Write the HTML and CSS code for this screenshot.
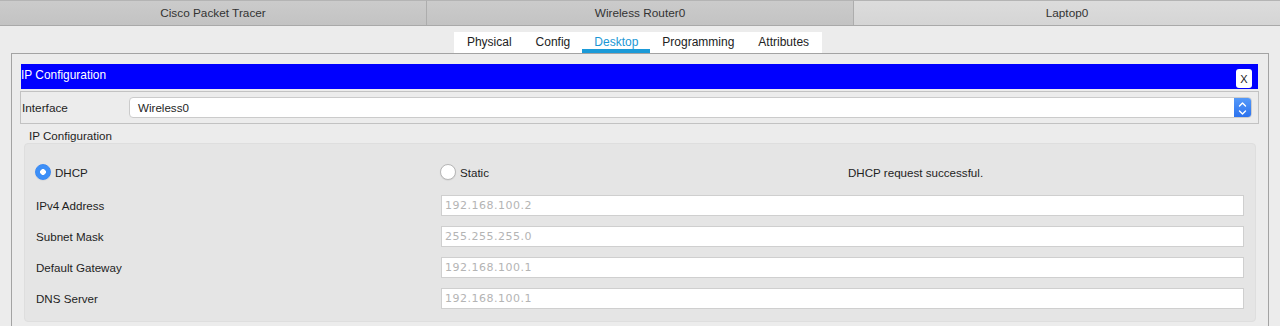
FILE: index.html
```html
<!DOCTYPE html>
<html>
<head>
<meta charset="utf-8">
<link rel="stylesheet" href="styles.css">
</head>
<body>
<div class="titlebar">
  <div class="wtab">Cisco Packet Tracer</div>
  <div class="wtab">Wireless Router0</div>
  <div class="wtab active">Laptop0</div>
</div>
<div class="subtabs-wrap">
  <div class="subtabs">
    <span class="stab">Physical</span>
    <span class="stab">Config</span>
    <span class="stab active">Desktop</span>
    <span class="stab">Programming</span>
    <span class="stab">Attributes</span>
  </div>
</div>
<div class="panel">
  <div class="app-title">
    <span class="app-name">IP Configuration</span>
    <span class="close">X</span>
  </div>
  <div class="iface-row">
    <span class="iface-label">Interface</span>
    <div class="select">
      <span class="select-value">Wireless0</span>
      <span class="stepper">
        <svg width="17" height="21" viewBox="0 0 17 21"><path d="M5.5 8 L8.5 5 L11.5 8" fill="none" stroke="#fff" stroke-width="1.4" stroke-linecap="round" stroke-linejoin="round"/><path d="M5.5 13 L8.5 16 L11.5 13" fill="none" stroke="#fff" stroke-width="1.4" stroke-linecap="round" stroke-linejoin="round"/></svg>
      </span>
    </div>
  </div>
  <div class="section-label">IP Configuration</div>
  <div class="ipbox">
    <div class="radio-row">
      <span class="radio-opt"><span class="radio on"></span>DHCP</span>
      <span class="radio-opt"><span class="radio"></span>Static</span>
      <span class="status">DHCP request successful.</span>
    </div>
    <div class="field"><span class="flabel">IPv4 Address</span><div class="input">192.168.100.2</div></div>
    <div class="field"><span class="flabel">Subnet Mask</span><div class="input">255.255.255.0</div></div>
    <div class="field"><span class="flabel">Default Gateway</span><div class="input">192.168.100.1</div></div>
    <div class="field"><span class="flabel">DNS Server</span><div class="input">192.168.100.1</div></div>
  </div>
</div>
</body>
</html>
```

FILE: styles.css
```css
* { box-sizing: border-box; }
html, body { margin: 0; padding: 0; }
body {
  background: #ececec;
  font-family: "Liberation Sans", Arial, sans-serif;
  font-size: 11.6px;
  color: #1e1e1e;
  overflow: hidden;
  height: 326px;
}
.titlebar {
  display: flex;
  height: 26px;
  border-bottom: 1px solid #a9a9a9;
}
.wtab {
  flex: 1;
  display: flex;
  align-items: center;
  justify-content: center;
  font-size: 11.8px;
  color: #333;
  background: linear-gradient(#cbcbcb, #c3c3c3);
  border-left: 1px solid #adadad;
  border-top: 1px solid #b4b4b4;
}
.wtab:first-child { border-left: none; }
.wtab.active { background: linear-gradient(#dcdcdc, #d5d5d5); }
.subtabs-wrap {
  display: flex;
  justify-content: center;
  padding-top: 6px;
  padding-right: 4px;
}
.subtabs {
  display: flex;
  background: #fff;
  height: 21px;
  padding: 0 1px;
}
.stab {
  display: flex;
  align-items: center;
  padding: 4px 12px 2px;
  font-size: 12px;
  color: #222;
  border-bottom: 4px solid transparent;
}
.stab.active {
  color: #1b97d5;
  border-bottom-color: #1b9ad8;
}
.panel {
  margin: 0 11px;
  border: 1px solid #a3a3a3;
  padding: 10px 10px 10px 9px;
}
.app-title {
  display: flex;
  justify-content: space-between;
  align-items: flex-start;
  height: 25px;
  background: #0000ff;
  color: #fff;
  font-size: 11.9px;
}
.app-name {
  line-height: 23px;
}
.close {
  width: 16px;
  height: 19px;
  margin: 5px 6px 0 0;
  background: #fff;
  color: #222;
  border-radius: 3px;
  display: flex;
  align-items: center;
  justify-content: center;
  font-size: 11px;
}
.iface-row {
  display: flex;
  margin: 2px -1px 0;
  border: 1px solid #c2c2c2;
  height: 33px;
  padding: 5px 6px 5px 1px;
  align-items: stretch;
}
.iface-label {
  width: 107px;
  display: flex;
  align-items: center;
  font-size: 11.8px;
}
.select {
  flex: 1;
  display: flex;
  background: #fff;
  border: 1px solid #cbcbcb;
  border-radius: 4px;
  overflow: hidden;
  height: 21px;
}
.select-value {
  flex: 1;
  display: flex;
  align-items: center;
  padding-left: 8px;
}
.stepper {
  width: 17px;
  background: linear-gradient(#5499f9, #2c72ee);
  display: flex;
}
.section-label {
  height: 19px;
  line-height: 24px;
  padding-left: 8px;
}
.ipbox {
  margin: 0 2px 0 3px;
  background: #e5e5e5;
  border: 1px solid #dedede;
  border-radius: 4px;
  padding: 20px 11px 12px 11px;
  display: flex;
  flex-direction: column;
  gap: 10px;
}
.radio-row {
  display: grid;
  grid-template-columns: 405px 407px 1fr;
  align-items: center;
  height: 16px;
  margin-bottom: 5px;
}
.radio-opt {
  display: flex;
  align-items: center;
  gap: 4px;
  margin-left: -1px;
}
.radio {
  width: 16px;
  height: 16px;
  border-radius: 50%;
  background: #fff;
  border: 1px solid #b7b7b7;
  box-shadow: 0 0.5px 1px rgba(0,0,0,0.1);
}
.radio.on {
  background: radial-gradient(circle, #fff 0 2.6px, #3d8ff7 3.1px);
  border-color: #3a8af4;
}
.status { color: #1e1e1e; }
.field {
  display: grid;
  grid-template-columns: 405px 1fr;
  align-items: center;
  height: 21px;
}
.input {
  height: 21px;
  background: #fff;
  border: 1px solid #cfcfcf;
  display: flex;
  align-items: center;
  padding-left: 3px;
  font-family: "DejaVu Sans", sans-serif;
  font-size: 11px;
  letter-spacing: 0.5px;
  color: #b4b4b4;
}
```
